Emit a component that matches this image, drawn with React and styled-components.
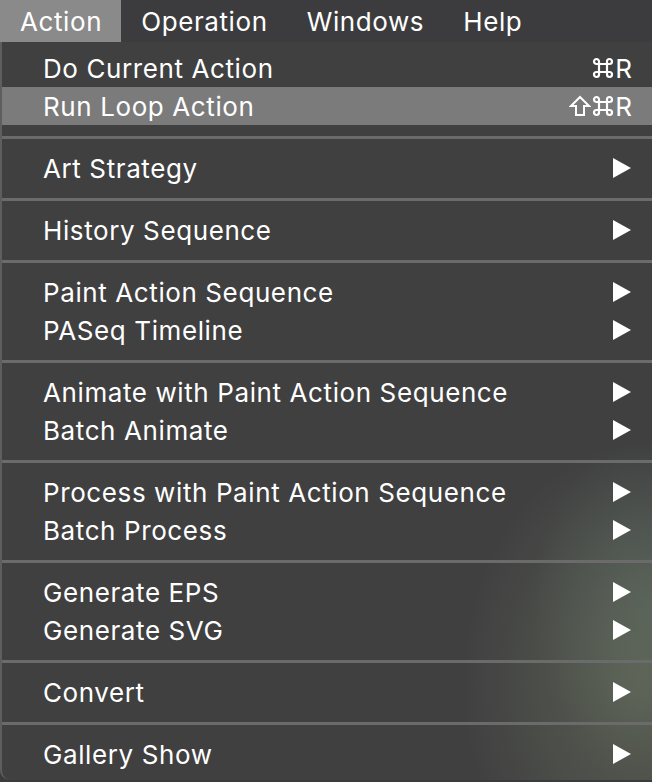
import React from "react";
import styled, { createGlobalStyle } from "styled-components";

const GlobalStyle = createGlobalStyle`
  html, body {
    margin: 0;
    padding: 0;
    background: #3b3b3d;
  }
  body {
    font-family: Inter, "Noto Sans", "Liberation Sans", sans-serif;
    -webkit-font-smoothing: antialiased;
  }
`;

const Screen = styled.div`
  width: 652px;
  height: 782px;
  overflow: hidden;
  background: #3b3b3d;
  display: flex;
  flex-direction: column;
`;

const MenuBar = styled.nav`
  height: 42px;
  display: flex;
  align-items: stretch;
  background: #3c3c3e;
  flex-shrink: 0;
`;

const BarItem = styled.div`
  display: flex;
  align-items: center;
  padding: 0 19px 0 20px;
  font-size: 26px;
  letter-spacing: 0.6px;
  color: #fff;
  background: ${props => (props.$active ? "#8a8a8a" : "transparent")};
`;

const Panel = styled.div`
  flex: 1;
  margin-bottom: 2px;
  padding: 7px 0 7px;
  border-left: 2px solid #5e5e5e;
  border-bottom-left-radius: 10px;
  background:
    radial-gradient(ellipse 180px 240px at 640px 640px, rgba(112, 122, 98, 0.55), rgba(112, 122, 98, 0) 100%),
    radial-gradient(ellipse 120px 160px at 650px 560px, rgba(95, 115, 110, 0.45), rgba(95, 115, 110, 0) 100%),
    #404041;
  display: flex;
  flex-direction: column;
`;

const Row = styled.div`
  height: 38px;
  display: flex;
  align-items: center;
  justify-content: space-between;
  padding: 0 20px 0 41px;
  font-size: 26px;
  letter-spacing: 0.6px;
  color: #fff;
  background: ${props => (props.$hover ? "#7b7b7b" : "transparent")};
`;

const Shortcut = styled.span`
  display: flex;
  align-items: center;
  gap: 1px;
  letter-spacing: 0;
`;

const Separator = styled.div`
  height: 24px;
  display: flex;
  align-items: center;
  &::after {
    content: "";
    flex: 1;
    height: 3px;
    background: #6b6b6b;
  }
`;

const Arrow = () => (
  <svg width="19" height="20" viewBox="0 0 19 20">
    <path d="M0 0 L18 10 L0 20 Z" fill="#fff" />
  </svg>
);

const Cmd = () => (
  <svg width="22" height="22" viewBox="0 0 22 22" fill="none" stroke="#fff" strokeWidth="2.2">
    <path d="M7 7 H15 V15 H7 Z" />
    <path d="M7 7 V4.5 A2.5 2.5 0 1 0 4.5 7 H7" />
    <path d="M15 7 V4.5 A2.5 2.5 0 1 1 17.5 7 H15" />
    <path d="M7 15 V17.5 A2.5 2.5 0 1 1 4.5 15 H7" />
    <path d="M15 15 V17.5 A2.5 2.5 0 1 0 17.5 15 H15" />
  </svg>
);

const Shift = () => (
  <svg width="22" height="22" viewBox="0 0 22 22" fill="none" stroke="#fff" strokeWidth="2" strokeLinejoin="miter">
    <path d="M11 2 L20 11 H15 V20 H7 V11 H2 Z" />
  </svg>
);

const groups = [
  [
    { label: "Do Current Action", keys: ["cmd"] },
    { label: "Run Loop Action", keys: ["shift", "cmd"], hover: true },
  ],
  [{ label: "Art Strategy", sub: true }],
  [{ label: "History Sequence", sub: true }],
  [
    { label: "Paint Action Sequence", sub: true },
    { label: "PASeq Timeline", sub: true },
  ],
  [
    { label: "Animate with Paint Action Sequence", sub: true },
    { label: "Batch Animate", sub: true },
  ],
  [
    { label: "Process with Paint Action Sequence", sub: true },
    { label: "Batch Process", sub: true },
  ],
  [
    { label: "Generate EPS", sub: true },
    { label: "Generate SVG", sub: true },
  ],
  [{ label: "Convert", sub: true }],
  [{ label: "Gallery Show", sub: true }],
];

export default function App() {
  return (
    <Screen>
      <GlobalStyle />
      <MenuBar>
        <BarItem $active>Action</BarItem>
        <BarItem>Operation</BarItem>
        <BarItem>Windows</BarItem>
        <BarItem>Help</BarItem>
      </MenuBar>
      <Panel>
        {groups.map((group, gi) => (
          <React.Fragment key={gi}>
            {gi > 0 && <Separator />}
            {group.map(item => (
              <Row key={item.label} $hover={item.hover}>
                <span>{item.label}</span>
                {item.sub && <Arrow />}
                {item.keys && (
                  <Shortcut>
                    {item.keys.includes("shift") && <Shift />}
                    <Cmd />
                    <span>R</span>
                  </Shortcut>
                )}
              </Row>
            ))}
          </React.Fragment>
        ))}
      </Panel>
    </Screen>
  );
}
